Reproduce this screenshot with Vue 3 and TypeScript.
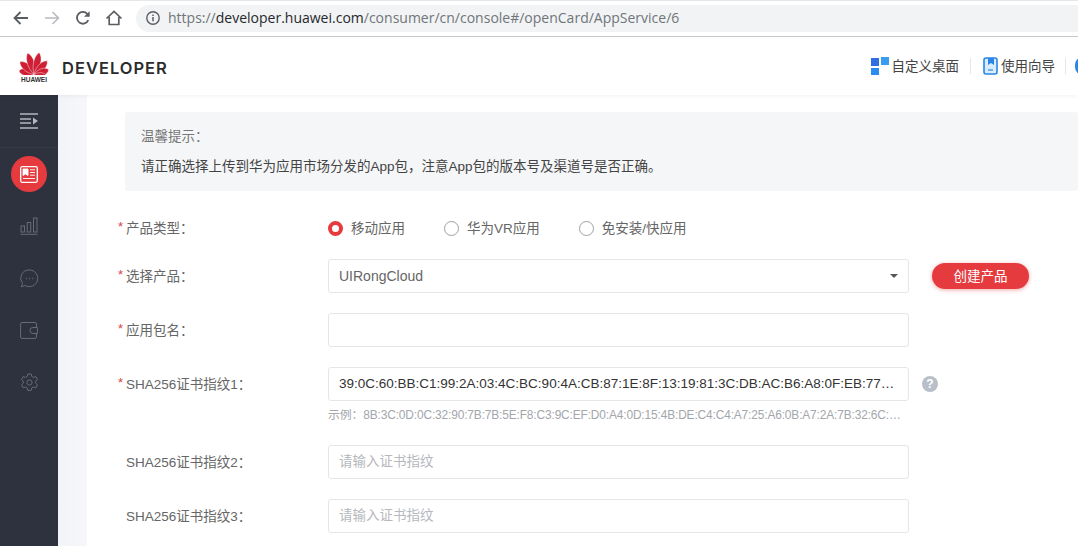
<script setup lang="ts">
const petals = [
  { a: -104, l: 13.5 }, { a: -74, l: 15.5 }, { a: -46, l: 19 }, { a: -15, l: 22.5 },
  { a: 15, l: 22.5 }, { a: 46, l: 19 }, { a: 74, l: 15.5 }, { a: 104, l: 13.5 },
]
const petalPath = (l: number) => `M0 0C-5 ${-l * 0.4} -4.4 ${-l * 0.82} -0.6 ${-l}C4.4 ${-l * 0.82} 5 ${-l * 0.35} 0 0Z`
const sha = '39:0C:60:BB:C1:99:2A:03:4C:BC:90:4A:CB:87:1E:8F:13:19:81:3C:DB:AC:B6:A8:0F:EB:77:4D:21:6A:90:3E'
const sample = '示例：8B:3C:0D:0C:32:90:7B:7B:5E:F8:C3:9C:EF:D0:A4:0D:15:4B:DE:C4:C4:A7:25:A6:0B:A7:2A:7B:32:6C:7F:1A:22'
const radios = [
  { label: '移动应用', on: true },
  { label: '华为VR应用', on: false },
  { label: '免安装/快应用', on: false },
]
</script>

<template>
  <div class="page">
    <div class="toolbar">
      <svg class="tb" width="18" height="18" viewBox="0 0 18 18"><path d="M16 9H3M8.5 3 2.5 9l6 6" fill="none" stroke="#5a5d62" stroke-width="1.8"/></svg>
      <svg class="tb" width="18" height="18" viewBox="0 0 18 18"><path d="M2 9h13M9.5 3l6 6-6 6" fill="none" stroke="#b9bbbe" stroke-width="1.6"/></svg>
      <svg class="tb" width="18" height="18" viewBox="0 0 18 18"><path d="M14.3 11.2A5.9 5.9 0 1 1 13.4 5L15 6.8" fill="none" stroke="#5a5d62" stroke-width="1.8"/><path d="M15.6 2.2v5.6H10z" fill="#5a5d62"/></svg>
      <svg class="tb" width="18" height="18" viewBox="0 0 18 18"><path d="M1.5 9.5 9 2.500l7.500 7M4.200 8v7.500h9.600V8" fill="none" stroke="#5a5d62" stroke-width="1.7"/></svg>
      <div class="address">
        <svg width="16" height="16" viewBox="0 0 16 16"><circle cx="8" cy="8" r="6.2" fill="none" stroke="#5a5d62" stroke-width="1.4"/><path d="M8 7v4.2M8 4.4v1.5" stroke="#5a5d62" stroke-width="1.5"/></svg>
        <span class="url"><span class="dim">https://</span>developer.huawei.com<span class="dim">/consumer/cn/console#/openCard/AppService/6</span></span>
      </div>
    </div>

    <header class="header">
      <div class="logo">
        <svg width="30" height="24" viewBox="0 0 30 24"><g transform="translate(15 23.5)"><path v-for="p in petals" :key="p.a" :d="petalPath(p.l)" :transform="`rotate(${p.a})`" fill="#cf1f35" stroke="#fff" stroke-width=".4"/></g></svg>
        <span>HUAWEI</span>
      </div>
      <div class="brand">DEVELOPER</div>
      <div class="tools">
        <svg width="18" height="18" viewBox="0 0 18 18"><rect x="0" y="1" width="8" height="8" fill="#2f6fe0"/><rect x="10" y="0" width="8" height="8" fill="#3a9cf0"/><rect x="0" y="11" width="8" height="7" fill="#2a8cee"/></svg>
        <span class="tool-text">自定义桌面</span>
        <i class="sep sep-a"></i>
        <svg width="15" height="18" viewBox="0 0 15 18"><rect x="1" y="1" width="13" height="16" rx="2" fill="#d9ecfb" stroke="#2a86e6" stroke-width="1.6"/><path d="M5 1h6v7L8 6 5 8z" fill="#2a86e6"/><path d="M5 13h5" stroke="#2a86e6" stroke-width="1.2"/></svg>
        <span class="tool-text">使用向导</span>
        <i class="sep sep-b"></i>
        <i class="avatar"></i>
      </div>
    </header>

    <div class="body">
      <aside class="sidebar">
        <div class="side-toggle">
          <svg width="18" height="16" viewBox="0 0 18 16"><path d="M0 1h18M0 6h11M0 10h11M0 15h18" stroke="#b4b7bf" stroke-width="1.5"/><path d="M13 4.500 18 8l-5 3.500z" fill="#b4b7bf"/></svg>
        </div>
        <div class="side-item">
          <span class="active-dot">
            <svg width="18" height="17" viewBox="0 0 18 17"><rect x=".7" y=".7" width="16.6" height="15.6" rx="1.5" fill="none" stroke="#fff" stroke-width="1.3"/><path d="M3 3h5v6.500L5.500 8 3 9.500zM10 3.800h5M10 6.500h5M10 9.200h5M3 12.500h12" fill="#fff" stroke="#fff" stroke-width=".9"/></svg>
          </span>
        </div>
        <div class="side-item">
          <svg width="18" height="18" viewBox="0 0 18 18" fill="none" stroke="#666b78" stroke-width="1"><rect x="1" y="9" width="3.500" height="6"/><rect x="7.200" y="5.500" width="3.500" height="9.500"/><rect x="13.500" y="1" width="3.500" height="14"/><path d="M.5 17.300h17"/></svg>
        </div>
        <div class="side-item">
          <svg width="19" height="19" viewBox="0 0 19 19" fill="none" stroke="#666b78" stroke-width="1"><path d="M9.500 1a8.300 8.300 0 1 1-4.200 15.500L1.300 17.800l1.200-3.400A8.300 8.300 0 0 1 9.500 1z"/><path d="M5.800 9.500h.9M9.100 9.500h.9M12.400 9.500h.9" stroke-width="1.300"/></svg>
        </div>
        <div class="side-item">
          <svg width="18" height="17" viewBox="0 0 18 17" fill="none" stroke="#666b78" stroke-width="1"><path d="M16.500 5V2a1.500 1.500 0 0 0-1.500-1.500H2A1.500 1.500 0 0 0 .6 2v13A1.500 1.500 0 0 0 2 16.400h13a1.500 1.500 0 0 0 1.500-1.500v-3"/><path d="M17.400 5.500h-4.500a3 3 0 0 0 0 6h4.500z"/></svg>
        </div>
        <div class="side-item">
          <svg width="19" height="19" viewBox="0 0 19 19" fill="none" stroke="#666b78" stroke-width="1"><path d="M7.800 1h3.400l.5 2.400 1.800 1 2.300-.8 1.700 3-1.800 1.600v2l1.800 1.600-1.700 3-2.300-.8-1.800 1-.5 2.400H7.800l-.5-2.400-1.800-1-2.300.8-1.700-3 1.800-1.600v-2L1.500 6.600l1.700-3 2.300.8 1.800-1z"/><circle cx="9.500" cy="9.500" r="2.600"/></svg>
        </div>
      </aside>
      <div class="gutter"></div>
      <main class="main">
        <section class="notice">
          <p class="notice-title">温馨提示：</p>
          <p class="notice-text">请正确选择上传到华为应用市场分发的App包，注意App包的版本号及渠道号是否正确。</p>
        </section>

        <form class="form" @submit.prevent>
          <div class="row radio-row">
            <label class="label"><b>*</b>产品类型：</label>
            <div class="radios">
              <span v-for="r in radios" :key="r.label" class="radio">
                <i :class="['mark', { on: r.on }]"></i><span class="radio-text">{{ r.label }}</span>
              </span>
            </div>
          </div>
          <div class="row">
            <label class="label"><b>*</b>选择产品：</label>
            <div class="field select">UIRongCloud<i class="caret"></i></div>
            <button class="create" type="button">创建产品</button>
          </div>
          <div class="row">
            <label class="label"><b>*</b>应用包名：</label>
            <input class="field" />
          </div>
          <div class="row hinted">
            <label class="label"><b>*</b>SHA256证书指纹1：</label>
            <input class="field" :value="sha" readonly />
            <span class="help">?</span>
            <p class="hint">{{ sample }}</p>
          </div>
          <div class="row">
            <label class="label"><b></b>SHA256证书指纹2：</label>
            <input class="field" placeholder="请输入证书指纹" />
          </div>
          <div class="row">
            <label class="label"><b></b>SHA256证书指纹3：</label>
            <input class="field" placeholder="请输入证书指纹" />
          </div>
        </form>
      </main>
    </div>
  </div>
</template>

<style>
html, body { margin: 0; background: #fff; overflow: hidden; }
</style>

<style scoped>
.page {
  width: 1078px;
  height: 546px;
  overflow: hidden;
  display: flex;
  flex-direction: column;
  font-family: "Liberation Sans", "Noto Sans CJK SC", sans-serif;
  font-size: 13.5px;
  color: #666;
}
.toolbar {
  height: 37px;
  box-sizing: border-box;
  flex: none;
  display: flex;
  align-items: center;
  padding: 0 0 1px 12px;
  border-top: 1px solid #e6e7e9;
  border-bottom: 1px solid #c9cacc;
  background: #fff;
}
.tb { margin-right: 13px; flex: none; }
.address {
  flex: 1;
  height: 27px;
  margin-right: -20px;
  padding-left: 9px;
  display: flex;
  align-items: center;
  gap: 7px;
  border-radius: 14px;
  background: #f1f3f4;
}
.url { padding-bottom: 2px; font-family: "Open Sans", sans-serif; font-size: 14px; color: #26282b; white-space: nowrap; }
.dim { color: #70757a; }
.header {
  height: 58px;
  flex: none;
  box-sizing: border-box;
  display: flex;
  align-items: center;
  padding-left: 19px;
  background: #fff;
  position: relative;
  z-index: 1;
  box-shadow: 0 1px 4px rgba(0, 0, 0, .06);
}
.logo { width: 30px; display: flex; flex-direction: column; align-items: center; margin-top: 1px; }
.logo svg { display: block; }
.logo span { font-size: 6.500px; line-height: 7px; font-weight: 700; color: #333; margin-top: 1px; }
.brand {
  margin: 4px 0 0 13px;
  font-family: "Inter", sans-serif;
  font-size: 16.500px;
  font-weight: 600;
  letter-spacing: 1px;
  color: #2b2b2b;
}
.tools { margin-left: auto; display: flex; align-items: center; margin-right: -5px; }
.tools svg { flex: none; }
.tool-text { margin: 0 0 3px 3px; font-size: 13.500px; color: #444; white-space: nowrap; }
.sep { width: 1px; height: 16px; background: #e6e7e9; }
.sep-a { margin: 0 12px 0 11px; }
.sep-b { margin: 0 9px 0 10px; }
.avatar { width: 8px; height: 18px; border-radius: 9px 0 0 9px; background: #2a86e6; }
.body { flex: 1; display: flex; min-height: 0; }
.sidebar { width: 58px; flex: none; background: #2e323f; }
.side-toggle {
  height: 52px;
  display: flex;
  align-items: center;
  justify-content: center;
  border-bottom: 1px solid #353946;
}
.side-item { height: 52px; display: flex; align-items: center; justify-content: center; }
.active-dot {
  width: 36px;
  height: 36px;
  border-radius: 50%;
  background: #e53b3f;
  display: flex;
  align-items: center;
  justify-content: center;
}
.gutter { width: 29px; flex: none; background: linear-gradient(90deg, #f2f4f7, #f6f7f9); }
.main { flex: 1; min-width: 0; background: #fff; padding: 17px 0 0 38px; }
.notice {
  height: 79px;
  box-sizing: border-box;
  padding: 15px 16px 0;
  border-radius: 3px;
  background: #f5f6f8;
}
.notice p { margin: 0; line-height: 20px; }
.notice-title { color: #777; }
.notice-text { margin-top: 10px !important; color: #444; }
.form { margin: 20px 0 0 -7px; }
.row { display: flex; align-items: center; height: 34px; margin-bottom: 20px; position: relative; }
.radio-row { margin-bottom: 14px; }
.hinted { margin-bottom: 44px; }
.label { width: 210px; flex: none; box-sizing: border-box; padding-bottom: 3px; white-space: nowrap; color: #666; display: flex; align-items: center; }
.label b { width: 8px; flex: none; font-weight: 400; color: #d9434a; font-size: 13px; }
.radios { display: flex; align-items: center; }
.radio { display: flex; align-items: center; margin-right: 39px; color: #666; }
.radio-text { padding-bottom: 2px; }
.mark {
  width: 15px;
  height: 15px;
  box-sizing: border-box;
  margin-right: 8px;
  border: 1px solid #9b9fa6;
  border-radius: 50%;
  background: #fff;
}
.mark.on { border: 4.500px solid #e53b3f; }
.field {
  width: 581px;
  height: 34px;
  flex: none;
  box-sizing: border-box;
  margin: 0;
  padding: 0 10px 1px;
  border: 1px solid #e4e6ea;
  border-radius: 3px;
  background: #fff;
  outline: none;
  font-family: "Liberation Sans", "Noto Sans CJK SC", sans-serif;
  font-size: 13.500px;
  color: #333;
  text-overflow: ellipsis;
}
.field::placeholder { color: #b5b8bd; opacity: 1; }
.select { display: flex; align-items: center; justify-content: space-between; color: #666; padding-right: 10px; font-size: 14px; }
.caret { width: 0; height: 0; border: 4px solid transparent; border-top-color: #555; border-bottom: 0; }
.create {
  width: 97px;
  height: 26px;
  margin-left: 23px;
  padding: 0 0 2px;
  border: none;
  border-radius: 13px;
  background: #e53b3f;
  box-shadow: 0 1px 4px rgba(229, 59, 63, .45);
  color: #fff;
  font-family: inherit;
  font-size: 13.500px;
}
.help {
  width: 16px;
  height: 16px;
  margin-left: 13px;
  border-radius: 50%;
  background: #b9bfc9;
  color: #fff;
  font-size: 12px;
  font-weight: 700;
  line-height: 16px;
  text-align: center;
}
.hint {
  position: absolute;
  top: 40px;
  left: 210px;
  width: 579px;
  margin: 0;
  overflow: hidden;
  white-space: nowrap;
  text-overflow: ellipsis;
  font-size: 11.900px;
  letter-spacing: -.13px;
  line-height: 16px;
  color: #a3a6ab;
}
</style>
